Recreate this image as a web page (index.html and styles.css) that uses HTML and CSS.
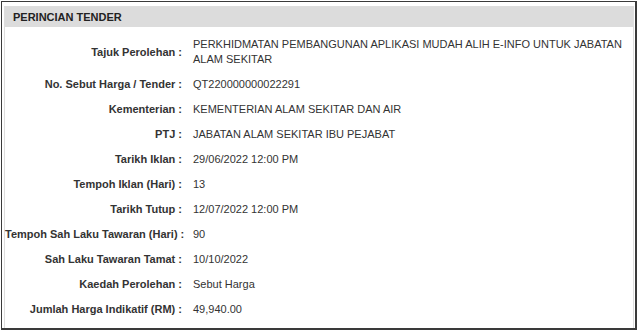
FILE: index.html
```html
<!DOCTYPE html>
<html>
<head>
<meta charset="utf-8">
<link rel="stylesheet" href="styles.css">
</head>
<body>
<div class="frame">
  <div class="panel">
    <div class="panel-head">PERINCIAN TENDER</div>
    <div class="panel-body">
      <div class="row">
        <div class="label">Tajuk Perolehan :</div>
        <div class="value">PERKHIDMATAN PEMBANGUNAN APLIKASI MUDAH ALIH E-INFO UNTUK JABATAN ALAM SEKITAR</div>
      </div>
      <div class="row">
        <div class="label">No. Sebut Harga / Tender :</div>
        <div class="value">QT220000000022291</div>
      </div>
      <div class="row">
        <div class="label">Kementerian :</div>
        <div class="value">KEMENTERIAN ALAM SEKITAR DAN AIR</div>
      </div>
      <div class="row">
        <div class="label">PTJ :</div>
        <div class="value">JABATAN ALAM SEKITAR IBU PEJABAT</div>
      </div>
      <div class="row">
        <div class="label">Tarikh Iklan :</div>
        <div class="value">29/06/2022 12:00 PM</div>
      </div>
      <div class="row">
        <div class="label">Tempoh Iklan (Hari) :</div>
        <div class="value">13</div>
      </div>
      <div class="row">
        <div class="label">Tarikh Tutup :</div>
        <div class="value">12/07/2022 12:00 PM</div>
      </div>
      <div class="row">
        <div class="label">Tempoh Sah Laku Tawaran (Hari) :</div>
        <div class="value">90</div>
      </div>
      <div class="row">
        <div class="label">Sah Laku Tawaran Tamat :</div>
        <div class="value">10/10/2022</div>
      </div>
      <div class="row">
        <div class="label">Kaedah Perolehan :</div>
        <div class="value">Sebut Harga</div>
      </div>
      <div class="row">
        <div class="label">Jumlah Harga Indikatif (RM) :</div>
        <div class="value">49,940.00</div>
      </div>
    </div>
  </div>
</div>
</body>
</html>
```

FILE: styles.css
```css
html, body {
  margin: 0;
  padding: 0;
  background: #ffffff;
}
body {
  font-family: "Liberation Sans", Arial, sans-serif;
  color: #333333;
  padding: 1px;
}
.frame {
  height: 329px;
  box-sizing: border-box;
  border-style: solid;
  border-color: #3a3a3a;
  border-width: 1px 2px 2px 1px;
  padding: 4px 1px 0 2px;
}
.panel {
  border: 1px solid #dddddd;
  border-bottom: none;
  height: 100%;
  box-sizing: border-box;
}
.panel-head {
  background: #dcdcdc;
  height: 20px;
  line-height: 20px;
  font-size: 11px;
  font-weight: bold;
  padding-left: 8px;
  color: #222222;
}
.panel-body {
  padding-top: 5px;
}
.row {
  display: grid;
  grid-template-columns: 177px 1fr;
  column-gap: 11px;
  align-items: center;
  font-size: 11px;
  padding: 5px 0;
}
.label {
  text-align: right;
  font-weight: bold;
  line-height: 15px;
  white-space: nowrap;
}
.value {
  line-height: 15px;
  max-width: 430px;
}
```
